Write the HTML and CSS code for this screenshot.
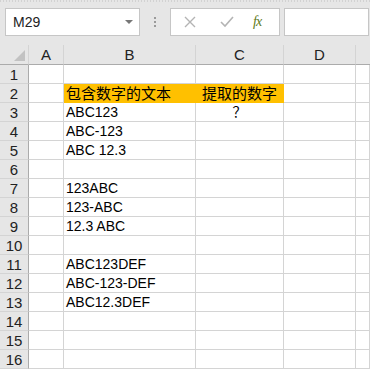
FILE: index.html
```html
<!DOCTYPE html>
<html>
<head>
<meta charset="utf-8">
<link rel="stylesheet" href="styles.css">
</head>
<body>
<div class="app">
  <div class="toolbar">
    <div class="namebox"><span class="name">M29</span><span class="caret"></span></div>
    <div class="grip"><i></i><i></i><i></i></div>
    <div class="fbtns">
      <svg class="ico" width="12" height="12" viewBox="0 0 12 12"><path d="M1 1L11 11M11 1L1 11" stroke="#b4b4b4" stroke-width="1.4" fill="none"/></svg>
      <svg class="ico" width="14" height="12" viewBox="0 0 14 12"><path d="M1 6L5 10L13 1" stroke="#b4b4b4" stroke-width="1.6" fill="none"/></svg>
      <span class="fx">fx</span>
    </div>
    <div class="fbar"></div>
  </div>
  <div class="sheet">
    <div class="corner"><span class="tri"></span></div>
    <div class="ch">A</div><div class="ch">B</div><div class="ch">C</div><div class="ch">D</div><div class="ch last"></div>

    <div class="rh">1</div><div class="c"></div><div class="c"></div><div class="c"></div><div class="c"></div><div class="c"></div>
    <div class="rh">2</div><div class="c"></div><div class="c hl">包含数字的文本</div><div class="c hl ctr">提取的数字</div><div class="c"></div><div class="c"></div>
    <div class="rh">3</div><div class="c"></div><div class="c">ABC123</div><div class="c ctr">？</div><div class="c"></div><div class="c"></div>
    <div class="rh">4</div><div class="c"></div><div class="c">ABC-123</div><div class="c"></div><div class="c"></div><div class="c"></div>
    <div class="rh">5</div><div class="c"></div><div class="c">ABC 12.3</div><div class="c"></div><div class="c"></div><div class="c"></div>
    <div class="rh">6</div><div class="c"></div><div class="c"></div><div class="c"></div><div class="c"></div><div class="c"></div>
    <div class="rh">7</div><div class="c"></div><div class="c">123ABC</div><div class="c"></div><div class="c"></div><div class="c"></div>
    <div class="rh">8</div><div class="c"></div><div class="c">123-ABC</div><div class="c"></div><div class="c"></div><div class="c"></div>
    <div class="rh">9</div><div class="c"></div><div class="c">12.3 ABC</div><div class="c"></div><div class="c"></div><div class="c"></div>
    <div class="rh">10</div><div class="c"></div><div class="c"></div><div class="c"></div><div class="c"></div><div class="c"></div>
    <div class="rh">11</div><div class="c"></div><div class="c">ABC123DEF</div><div class="c"></div><div class="c"></div><div class="c"></div>
    <div class="rh">12</div><div class="c"></div><div class="c">ABC-123-DEF</div><div class="c"></div><div class="c"></div><div class="c"></div>
    <div class="rh">13</div><div class="c"></div><div class="c">ABC12.3DEF</div><div class="c"></div><div class="c"></div><div class="c"></div>
    <div class="rh">14</div><div class="c"></div><div class="c"></div><div class="c"></div><div class="c"></div><div class="c"></div>
    <div class="rh">15</div><div class="c"></div><div class="c"></div><div class="c"></div><div class="c"></div><div class="c"></div>
    <div class="rh">16</div><div class="c"></div><div class="c"></div><div class="c"></div><div class="c"></div><div class="c"></div>
  </div>
</div>
</body>
</html>
```

FILE: styles.css
```css
* { box-sizing: border-box; }
html, body { margin: 0; padding: 0; background: #fff; }
body {
  font-family: "Liberation Sans", "Noto Sans CJK SC", sans-serif;
  font-size: 14px;
  color: #000;
  width: 370px;
  height: 371px;
  overflow: hidden;
}
.toolbar {
  height: 45px;
  background: #e6e6e6;
  background-image: repeating-linear-gradient(90deg, #d2d2d2 0 1px, transparent 1px 3px);
  background-size: 100% 2px;
  background-repeat: no-repeat;
  display: flex;
  align-items: flex-start;
  padding-top: 8px;
}
.namebox {
  margin-left: 5px;
  width: 135px;
  height: 28px;
  background: #fff;
  border: 1px solid #c6c6c6;
  display: flex;
  align-items: center;
  justify-content: space-between;
  padding: 0 6px 0 7px;
}
.name { font-size: 14px; color: #222; }
.caret {
  width: 0; height: 0;
  border-left: 4px solid transparent;
  border-right: 4px solid transparent;
  border-top: 4px solid #777;
}
.grip {
  width: 30px;
  height: 28px;
  display: flex;
  flex-direction: column;
  align-items: center;
  justify-content: center;
  gap: 2px;
}
.grip i { display: block; width: 2px; height: 2px; background: #9a9a9a; }
.fbtns {
  width: 110px;
  height: 28px;
  background: #fff;
  border: 1px solid #c6c6c6;
  display: flex;
  align-items: center;
  padding-left: 13px;
}
.fbtns .ico:nth-child(1) { margin-right: 24px; }
.fbtns .ico:nth-child(2) { margin-right: 19px; }
.fx {
  font-family: "Liberation Serif", serif;
  font-style: italic;
  font-size: 14px;
  color: #5e7a22;
  letter-spacing: -1px;
}
.fbar {
  margin-left: 4px;
  flex: 1;
  height: 28px;
  background: #fff;
  border: 1px solid #c6c6c6;
  margin-right: 1px;
}
.sheet {
  display: grid;
  grid-template-columns: 29px 35px 132px 88px 72px 1fr;
  grid-template-rows: 20px repeat(16, 19px);
}
.corner {
  background: #e6e6e6;
  border-right: 1px solid #d4d4d4;
  border-bottom: 1px solid #ababab;
  position: relative;
}
.tri {
  position: absolute;
  right: 3px;
  bottom: 3px;
  width: 0; height: 0;
  border-left: 11px solid transparent;
  border-bottom: 11px solid #c2c2c2;
}
.ch {
  background: #e6e6e6;
  border-bottom: 1px solid #ababab;
  border-right: 1px solid #d4d4d4;
  text-align: center;
  font-size: 15px;
  line-height: 20px;
  color: #222;
}
.ch.last { border-right: none; }
.rh {
  background: #e6e6e6;
  border-right: 1px solid #ababab;
  border-bottom: 1px solid #d4d4d4;
  text-align: center;
  font-size: 15px;
  line-height: 19px;
  color: #222;
}
.c {
  border-right: 1px solid #d4d4d4;
  border-bottom: 1px solid #d4d4d4;
  line-height: 19px;
  padding-left: 2px;
  white-space: nowrap;
}
.c.hl {
  background: #ffc000;
  border-right-color: #ffc000;
  border-bottom-color: #ffc000;
  font-family: "Noto Sans CJK SC", sans-serif;
  font-size: 15px;
  line-height: 18px;
}
.c.ctr { text-align: center; padding-left: 0; }
```
